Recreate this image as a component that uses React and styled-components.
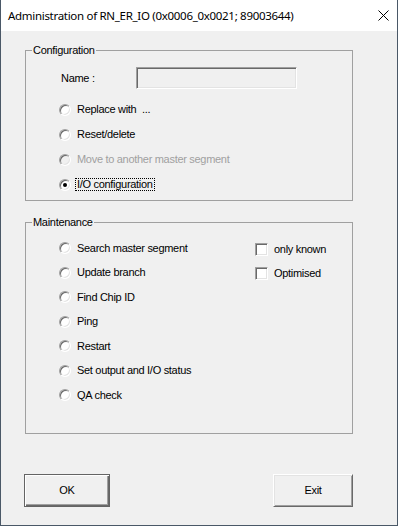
import React from 'react';
import styled, { createGlobalStyle } from 'styled-components';

const GlobalStyle = createGlobalStyle`
  html, body {
    margin: 0;
    padding: 0;
    background: #f0f0f0;
  }
`;

const Window = styled.div`
  width: 398px;
  height: 526px;
  box-sizing: border-box;
  border: 1px solid #4a5867;
  border-top: none;
  background: #f0f0f0;
  display: flex;
  flex-direction: column;
  font-family: 'Liberation Sans', Arial, sans-serif;
  font-size: 11px;
  letter-spacing: -0.3px;
  color: #000;
`;

const TitleBar = styled.div`
  height: 31px;
  flex: none;
  background: #fff;
  display: flex;
  align-items: center;
  justify-content: space-between;
  padding-left: 7px;
  font-family: 'Noto Sans', 'Liberation Sans', sans-serif;
  font-size: 11.5px;
  letter-spacing: -0.3px;
`;

const CloseBtn = styled.div`
  width: 30px;
  height: 31px;
  display: flex;
  align-items: center;
  justify-content: center;
  margin-right: -1px;
`;

const Body = styled.div`
  flex: 1;
  padding: 12px 44px 0 24px;
  display: flex;
  flex-direction: column;
`;

const Group = styled.fieldset`
  margin: ${(p) => p.$top || 0}px 0 0;
  padding: 0 0 ${(p) => p.$bottom || 0}px;
  border: 1px solid #a0a0a0;
  min-width: 0;
`;

const Legend = styled.legend`
  margin-left: 6px;
  padding: 0 1px;
  height: 14px;
  line-height: 14px;
`;

const NameRow = styled.div`
  display: flex;
  align-items: center;
  height: 22px;
  margin-top: 10px;
  padding-left: 35px;
`;

const NameLabel = styled.span`
  width: 75px;
`;

const TextBox = styled.div`
  width: 161px;
  height: 22px;
  box-sizing: border-box;
  background: #f0f0f0;
  border: 1px solid;
  border-color: #a0a0a0 #fff #fff #a0a0a0;
  box-shadow: inset 1px 1px 0 #696969, inset -1px -1px 0 #e3e3e3;
`;

const Options = styled.div`
  margin-top: ${(p) => p.$top || 0}px;
  padding-left: 33px;
  display: ${(p) => (p.$split ? 'grid' : 'block')};
  grid-template-columns: 196px 1fr;
`;

const Column = styled.div`
  margin-top: ${(p) => p.$top || 0}px;
`;

const Row = styled.div`
  display: flex;
  align-items: center;
  height: ${(p) => p.$h || 25}px;
  gap: 5px;
  color: ${(p) => (p.$disabled ? '#a0a0a0' : '#000')};
`;

const RadioDot = styled.span`
  width: 12px;
  height: 12px;
  box-sizing: border-box;
  border-radius: 50%;
  flex: none;
  background: ${(p) => (p.$disabled ? '#f0f0f0' : '#fff')};
  border: 1px solid;
  border-color: #a0a0a0 #fff #fff #a0a0a0;
  box-shadow: inset 1px 1px 0 #696969, inset -1px -1px 0 #e3e3e3;
  display: flex;
  align-items: center;
  justify-content: center;

  &::after {
    content: '';
    display: ${(p) => (p.$checked ? 'block' : 'none')};
    width: 4px;
    height: 4px;
    border-radius: 50%;
    background: #000;
  }
`;

const CheckBox = styled.span`
  width: 13px;
  height: 13px;
  box-sizing: border-box;
  flex: none;
  background: #fff;
  border: 1px solid;
  border-color: #a0a0a0 #fff #fff #a0a0a0;
  box-shadow: inset 1px 1px 0 #696969, inset -1px -1px 0 #e3e3e3;
`;

const Caption = styled.span`
  padding: 0 1px;
  line-height: 11px;
  white-space: pre;
  outline: ${(p) => (p.$focus ? '1px dotted #000' : 'none')};
`;

const ButtonRow = styled.div`
  display: flex;
  justify-content: space-between;
  margin-top: 40px;
  margin-left: -1px;
`;

const Button = styled.button`
  width: ${(p) => p.$w}px;
  height: 33px;
  box-sizing: border-box;
  background: #f0f0f0;
  font: inherit;
  letter-spacing: inherit;
  color: #000;
  padding: 0;
  border: 1px solid;
  border-color: ${(p) => (p.$default ? '#646464' : '#fff #696969 #696969 #fff')};
  box-shadow: ${(p) =>
    p.$default
      ? 'inset 1px 1px 0 #fff, inset -1px -1px 0 #696969, inset -2px -2px 0 #a0a0a0'
      : 'inset 1px 1px 0 #e3e3e3, inset -1px -1px 0 #a0a0a0'};
`;

const configOptions = [
  { label: 'Replace with  ...' },
  { label: 'Reset/delete' },
  { label: 'Move to another master segment', disabled: true },
  { label: 'I/O configuration', checked: true, focus: true },
];

const maintOptions = [
  'Search master segment',
  'Update branch',
  'Find Chip ID',
  'Ping',
  'Restart',
  'Set output and I/O status',
  'QA check',
];

const Radio = ({ label, checked, disabled, focus, h }) => (
  <Row $disabled={disabled} $h={h}>
    <RadioDot $checked={checked} $disabled={disabled} />
    <Caption $focus={focus}>{label}</Caption>
  </Row>
);

export default function App() {
  return (
    <>
      <GlobalStyle />
      <Window>
        <TitleBar>
          <span>Administration of RN_ER_IO (0x0006_0x0021; 89003644)</span>
          <CloseBtn>
            <svg width="11" height="11" viewBox="0 0 11 11">
              <path d="M0.5 0.5 L10.5 10.5 M10.5 0.5 L0.5 10.5" stroke="#000" strokeWidth="1" />
            </svg>
          </CloseBtn>
        </TitleBar>
        <Body>
          <Group $bottom={3}>
            <Legend>Configuration</Legend>
            <NameRow>
              <NameLabel>Name :</NameLabel>
              <TextBox />
            </NameRow>
            <Options $top={8}>
              {configOptions.map((o) => (
                <Radio key={o.label} {...o} />
              ))}
            </Options>
          </Group>
          <Group $top={14} $bottom={25}>
            <Legend>Maintenance</Legend>
            <Options $top={7} $split>
              <Column>
                {maintOptions.map((l) => (
                  <Radio key={l} label={l} h={24.5} />
                ))}
              </Column>
              <Column $top={1}>
                <Row $h={24.5}>
                  <CheckBox />
                  <Caption>only known</Caption>
                </Row>
                <Row $h={24.5}>
                  <CheckBox />
                  <Caption>Optimised</Caption>
                </Row>
              </Column>
            </Options>
          </Group>
          <ButtonRow>
            <Button $w={86} $default>OK</Button>
            <Button $w={80}>Exit</Button>
          </ButtonRow>
        </Body>
      </Window>
    </>
  );
}
